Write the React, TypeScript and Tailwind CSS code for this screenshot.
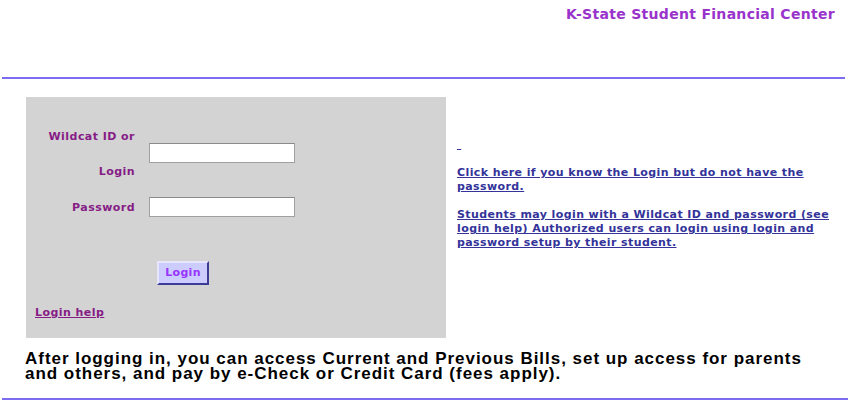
import React from "react";

const verdana = "font-['Verdana','DejaVu_Sans',sans-serif]";

export default function App() {
  return (
    <div className="min-h-[406px] bg-white text-black">
      {/* header */}
      <div className="h-[77px] pt-[1px] pr-[16px] text-right">
        <span className={`${verdana} text-[14px] leading-[17px] font-bold tracking-[0.3px] text-[#9933cc]`}>
          K-State Student Financial Center
        </span>
      </div>
      <div className="ml-[2px] mr-[6px] h-[2px] bg-[#7b6cf0]" />

      <div className="flex mt-[18px] pl-[26px]">
        {/* login box */}
        <div className={`${verdana} w-[420px] h-[241px] bg-[#d3d3d3] pt-[33px] font-bold text-[11px] tracking-[0.45px]`}>
          <div className="grid grid-cols-[109px_146px] gap-x-[14px] text-[#861c86]">
            <div className="text-right leading-[13px]">Wildcat ID or</div>
            <div />
            <div />
            <input
              type="text"
              className="h-[20px] w-[146px] bg-white border border-[#a0a0a0] border-t-[#8a8a8a]"
            />
            <div className="text-right leading-[13px] pt-[2px]">Login</div>
            <div />
          </div>
          <div className="grid grid-cols-[109px_146px] gap-x-[14px] mt-[19px] items-center text-[#861c86]">
            <div className="text-right leading-[13px]">Password</div>
            <input
              type="password"
              className="h-[20px] w-[146px] bg-white border border-[#a0a0a0] border-t-[#8a8a8a]"
            />
          </div>
          <div className="mt-[44px] pl-[131px]">
            <button className="h-[24px] w-[52px] bg-[#ccccff] text-[#9933ff] text-[11px] font-bold tracking-[0.3px] border-2 border-t-[#e6e6ff] border-l-[#e6e6ff] border-r-[#3c3c96] border-b-[#3c3c96]">
              Login
            </button>
          </div>
          <div className="mt-[20px] pl-[9px]">
            <a href="#" className="underline text-[#861c86] leading-[14px]">
              Login help
            </a>
          </div>
        </div>

        {/* right column */}
        <div className={`${verdana} pl-[11px] pt-[41px] w-[385px] text-[11px] leading-[14px] font-bold tracking-[0.4px] text-[#33339a]`}>
          <a href="#" className="underline">&nbsp;</a>
          <div className="h-[14px]" />
          <a href="#" className="underline">
            Click here if you know the Login but do not have the password.
          </a>
          <div className="h-[14px]" />
          <a href="#" className="underline">
            Students may login with a Wildcat ID and password (see login help) Authorized users can login using login and password setup by their student.
          </a>
        </div>
      </div>

      <div className="pl-[25px] pt-[13px] pr-[30px] font-['Liberation_Sans',Arial,sans-serif] text-[17px] leading-[15px] font-bold tracking-[0.97px]">
        After logging in, you can access Current and Previous Bills, set up access for parents and others, and pay by e-Check or Credit Card (fees apply).
      </div>
      <div className="mt-[17px] ml-[2px] mr-[3px] h-[2px] bg-[#7b6cf0]" />
    </div>
  );
}
